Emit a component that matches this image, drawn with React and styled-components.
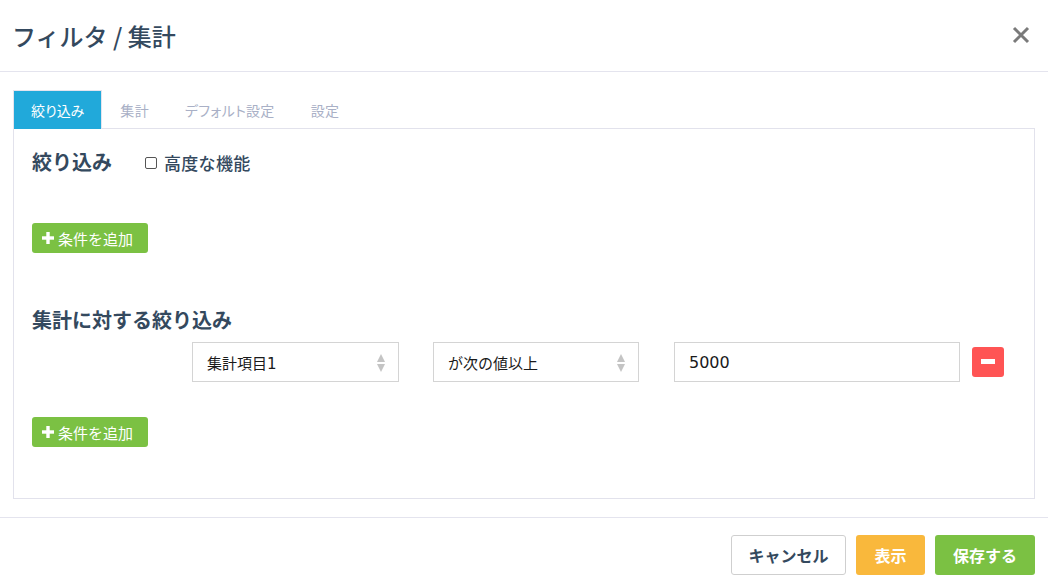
import React, { useState } from "react";
import styled, { createGlobalStyle } from "styled-components";

const GlobalStyle = createGlobalStyle`
  html, body {
    margin: 0;
    padding: 0;
    background: #fff;
  }
  body {
    font-family: "Noto Sans CJK JP", "Noto Sans", sans-serif;
    color: #34495e;
  }
  * {
    box-sizing: border-box;
  }
`;

const StyledModal = styled.div`
  width: 1048px;
  height: 585px;
  display: flex;
  flex-direction: column;
  background: #fff;
`;

const StyledHeader = styled.div`
  height: 72px;
  display: flex;
  align-items: center;
  justify-content: space-between;
  padding: 0 16px 0 12px;
  border-bottom: 1px solid #e4e4ee;
`;

const StyledTitle = styled.h1`
  margin: 0;
  font-size: 24px;
  font-weight: 500;
  color: #34495e;
  line-height: 1;
`;

const StyledClose = styled.button`
  width: 22px;
  height: 22px;
  padding: 0;
  border: none;
  background: none;
  display: flex;
  align-items: center;
  justify-content: center;
  margin-top: -2px;
`;

const StyledBody = styled.div`
  padding: 18px 13px 0 13px;
`;

const StyledTabs = styled.div`
  display: flex;
  height: 39px;
`;

const StyledTab = styled.div`
  height: 39px;
  display: flex;
  align-items: center;
  padding: 0 17px;
  font-size: 14px;
  font-feature-settings: "palt";
  letter-spacing: ${({ active }) => (active ? "0" : "0.3px")};
  color: ${({ active }) => (active ? "#fff" : "#a9b0c6")};
  background: ${({ active }) => (active ? "#21a9da" : "transparent")};
  border: 1px solid ${({ active }) => (active ? "#e4e4ee" : "transparent")};
  border-bottom: none;
  cursor: pointer;
`;

const StyledPanel = styled.div`
  border: 1px solid #e2e2ec;
  height: 371px;
  margin-top: -1px;
  padding: 19px 18px 0 18px;
`;

const StyledSectionHead = styled.div`
  display: flex;
  align-items: center;
  gap: 32px;
  height: 28px;
`;

const StyledHeading = styled.h2`
  margin: 0;
  font-size: 20px;
  font-weight: 700;
  line-height: 28px;
  color: #34495e;
`;

const StyledCheckLabel = styled.label`
  display: flex;
  align-items: center;
  gap: 7px;
  font-size: 17px;
  font-weight: 500;
  letter-spacing: 0.3px;
  color: #34495e;
  margin-top: 1px;
`;

const StyledCheckbox = styled.input`
  appearance: none;
  width: 12px;
  height: 12px;
  margin: 0 0 0 1px;
  border: 1px solid #555;
  border-radius: 2px;
  background: #fff;
`;

const StyledAddButton = styled.button`
  display: flex;
  align-items: center;
  gap: 4px;
  height: 30px;
  width: 116px;
  padding: 0 10px;
  margin-top: ${({ offset }) => offset}px;
  border: none;
  border-radius: 3px;
  background: #7bc143;
  color: #fff;
  font-family: inherit;
  font-size: 15px;
  cursor: pointer;
`;

const StyledSectionTitle = styled(StyledHeading)`
  margin-top: 53px;
`;

const StyledRow = styled.div`
  display: flex;
  align-items: center;
  margin-top: 8px;
  padding-left: 160px;
`;

const StyledSelect = styled.div`
  position: relative;
  width: ${({ w }) => w}px;
  height: 40px;
  margin-right: ${({ gap }) => gap}px;
  border: 1px solid #d4d4d4;
  display: flex;
  align-items: center;
  padding-left: 14px;
  font-family: "DejaVu Sans", "Noto Sans CJK JP", sans-serif;
  font-size: 15px;
  color: #1a1a1a;
  background: #fff;
`;

const StyledArrows = styled.svg`
  position: absolute;
  right: 12px;
  top: 10px;
`;

const StyledInput = styled.input`
  width: 286px;
  height: 40px;
  border: 1px solid #d4d4d4;
  padding: 0 14px;
  font-family: "DejaVu Sans", "Noto Sans CJK JP", sans-serif;
  font-size: 16px;
  color: #1a1a1a;
  outline: none;
`;

const StyledRemove = styled.button`
  width: 32px;
  height: 30px;
  margin-left: 12px;
  border: none;
  border-radius: 3px;
  background: #ff5454;
  display: flex;
  align-items: center;
  justify-content: center;
  padding: 0;
  cursor: pointer;
`;

const StyledFooter = styled.div`
  margin-top: 18px;
  border-top: 1px solid #e4e4ee;
  display: flex;
  justify-content: flex-end;
  gap: 10px;
  padding: 17px 13px 0 0;
`;

const StyledFooterButton = styled.button`
  height: 40px;
  width: ${({ w }) => w}px;
  padding: 0;
  border-radius: 3px;
  border: 1px solid ${({ variant }) => (variant === "default" ? "#cfcfcf" : "transparent")};
  background: ${({ variant }) =>
    variant === "warning" ? "#f9b83c" : variant === "success" ? "#7bc143" : "#fff"};
  color: ${({ variant }) => (variant === "default" ? "#34495e" : "#fff")};
  font-family: inherit;
  font-size: 16px;
  font-weight: 700;
  cursor: pointer;
`;

const PlusIcon = () => (
  <svg width="12" height="12" viewBox="0 0 12 12">
    <rect x="4.3" y="0" width="3.4" height="12" fill="#fff" />
    <rect x="0" y="4.3" width="12" height="3.4" fill="#fff" />
  </svg>
);

const SortArrows = () => (
  <StyledArrows width="10" height="20" viewBox="0 0 10 20">
    <path d="M5 1 L9 9 H1 Z" fill="#c4c4c4" />
    <path d="M5 19 L9 11 H1 Z" fill="#c4c4c4" />
  </StyledArrows>
);

const tabs = ["絞り込み", "集計", "デフォルト設定", "設定"];

const App = () => {
  const [activeTab, setActiveTab] = useState(0);
  const [value, setValue] = useState("5000");

  return (
    <>
      <GlobalStyle />
      <StyledModal>
        <StyledHeader>
          <StyledTitle>フィルタ / 集計</StyledTitle>
          <StyledClose aria-label="close">
            <svg width="18" height="18" viewBox="0 0 18 18">
              <path d="M2 2 L16 16 M16 2 L2 16" stroke="#7a7a7a" strokeWidth="3" />
            </svg>
          </StyledClose>
        </StyledHeader>
        <StyledBody>
          <StyledTabs>
            {tabs.map((t, i) => (
              <StyledTab key={t} active={i === activeTab} onClick={() => setActiveTab(i)}>
                {t}
              </StyledTab>
            ))}
          </StyledTabs>
          <StyledPanel>
            <StyledSectionHead>
              <StyledHeading>絞り込み</StyledHeading>
              <StyledCheckLabel>
                <StyledCheckbox type="checkbox" />
                高度な機能
              </StyledCheckLabel>
            </StyledSectionHead>
            <StyledAddButton offset={47}>
              <PlusIcon />
              条件を追加
            </StyledAddButton>
            <StyledSectionTitle>集計に対する絞り込み</StyledSectionTitle>
            <StyledRow>
              <StyledSelect w={207} gap={34}>
                集計項目1
                <SortArrows />
              </StyledSelect>
              <StyledSelect w={206} gap={35}>
                が次の値以上
                <SortArrows />
              </StyledSelect>
              <StyledInput value={value} onChange={(e) => setValue(e.target.value)} />
              <StyledRemove aria-label="remove">
                <svg width="14" height="6" viewBox="0 0 14 6">
                  <rect width="14" height="5" fill="#fff" />
                </svg>
              </StyledRemove>
            </StyledRow>
            <StyledAddButton offset={35}>
              <PlusIcon />
              条件を追加
            </StyledAddButton>
          </StyledPanel>
        </StyledBody>
        <StyledFooter>
          <StyledFooterButton variant="default" w={115}>キャンセル</StyledFooterButton>
          <StyledFooterButton variant="warning" w={69}>表示</StyledFooterButton>
          <StyledFooterButton variant="success" w={100}>保存する</StyledFooterButton>
        </StyledFooter>
      </StyledModal>
    </>
  );
};

export default App;
